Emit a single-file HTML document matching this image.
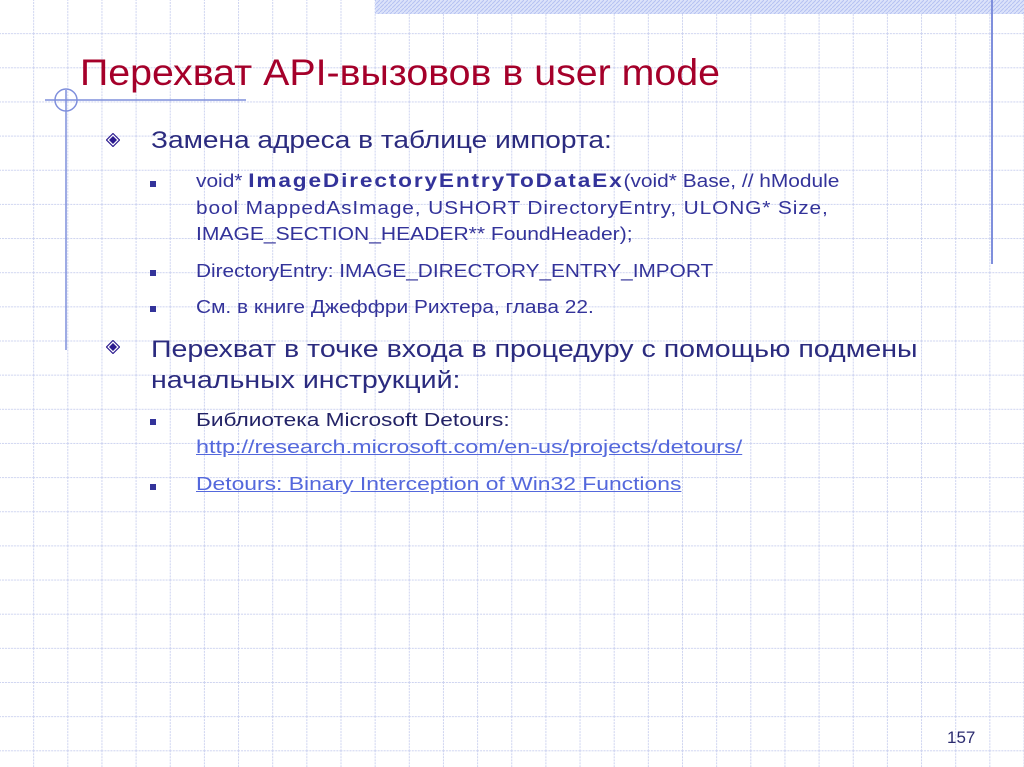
<!DOCTYPE html>
<html><head><meta charset="utf-8"><style>
html,body{margin:0;padding:0}
body{width:1024px;height:767px;position:relative;overflow:hidden;background:#fff;font-family:"Liberation Sans","DejaVu Sans",sans-serif}
.t{position:absolute;white-space:nowrap;transform-origin:0 0}
.l1{font-size:24px;color:#2b2b7f;left:151px}
.l2{font-size:18px;color:#33339a;left:196px}
.sq{position:absolute;width:6px;height:6px;background:#33339a;left:150px}
.dm{position:absolute;left:106px;width:14px;height:14px}
a{color:#5468dc;text-decoration:underline}
</style></head><body>
<svg width="1024" height="767" style="position:absolute;left:0;top:0">
<defs>
<pattern id="g" x="-1" y="-1" width="34.15" height="34.15" patternUnits="userSpaceOnUse">
<path d="M0 0.5H34.15M0.5 0V34.15" stroke="#cdd3f0" stroke-width="1" stroke-dasharray="2 1" fill="none"/>
</pattern>
<pattern id="h" width="4" height="4" patternUnits="userSpaceOnUse">
<rect width="4" height="4" fill="#dce3fa"/><path d="M0 4L4 0" stroke="#b5c2f2" stroke-width="1"/>
</pattern>
</defs>
<rect width="1024" height="767" fill="url(#g)"/>
<rect x="375" y="0" width="649" height="14" fill="url(#h)"/>
<line x1="992" y1="0" x2="992" y2="264" stroke="#7f8fdc" stroke-width="2"/>
<line x1="45" y1="100" x2="246" y2="100" stroke="#7f8fdc" stroke-width="1.5"/>
<line x1="66" y1="90" x2="66" y2="350" stroke="#7f8fdc" stroke-width="1.5"/>
<circle cx="66" cy="100" r="11" stroke="#7f8fdc" stroke-width="1.5" fill="none"/>
</svg>
<div class="t" style="left:80px;top:52px;font-size:37px;color:#a5002a;transform:scaleX(1.063)">Перехват API-вызовов в user mode</div>

<svg class="dm" style="top:133px" viewBox="0 0 14 14"><path d="M7 0.5L13.5 7L7 13.5L0.5 7Z" fill="#fff" stroke="#2b1a8f" stroke-width="1.2"/><path d="M7 3L11 7L7 11L3 7Z" fill="#2b1a8f"/></svg>
<div class="t l1" style="top:127px;transform:scaleX(1.17)">Замена адреса в таблице импорта:</div>

<div class="sq" style="top:181px"></div>
<div class="t l2" style="top:171px;transform:scaleX(1.16)">void* <b style="font-size:19.5px;letter-spacing:1.6px;line-height:18px">ImageDirectoryEntryToDataEx</b>(void* Base, // hModule</div>
<div class="t l2" style="top:198px;transform:scaleX(1.16);letter-spacing:0.75px">bool MappedAsImage, USHORT DirectoryEntry, ULONG* Size,</div>
<div class="t l2" style="top:224px;transform:scaleX(1.17)">IMAGE_SECTION_HEADER** FoundHeader);</div>
<div class="sq" style="top:270px"></div>
<div class="t l2" style="top:261px;transform:scaleX(1.155)">DirectoryEntry: IMAGE_DIRECTORY_ENTRY_IMPORT</div>
<div class="sq" style="top:306px"></div>
<div class="t l2" style="top:297px;transform:scaleX(1.16)">См. в книге Джеффри Рихтера, глава 22.</div>

<svg class="dm" style="top:340px" viewBox="0 0 14 14"><path d="M7 0.5L13.5 7L7 13.5L0.5 7Z" fill="#fff" stroke="#2b1a8f" stroke-width="1.2"/><path d="M7 3L11 7L7 11L3 7Z" fill="#2b1a8f"/></svg>
<div class="t l1" style="top:334px;line-height:31px;transform:scaleX(1.19)">Перехват в точке входа в процедуру с помощью подмены<br>начальных инструкций:</div>

<div class="sq" style="top:419px"></div>
<div class="t l2" style="top:410px;color:#232366;transform:scaleX(1.26)">Библиотека Microsoft Detours:</div>
<div class="t l2" style="top:437px;transform:scaleX(1.3)"><a>http://research.microsoft.com/en-us/projects/detours/</a></div>
<div class="sq" style="top:484px"></div>
<div class="t l2" style="top:474px;transform:scaleX(1.27)"><a>Detours: Binary Interception of Win32 Functions</a></div>

<div class="t" style="left:947px;top:728px;font-size:17px;color:#2b2b6f">157</div>
</body></html>
